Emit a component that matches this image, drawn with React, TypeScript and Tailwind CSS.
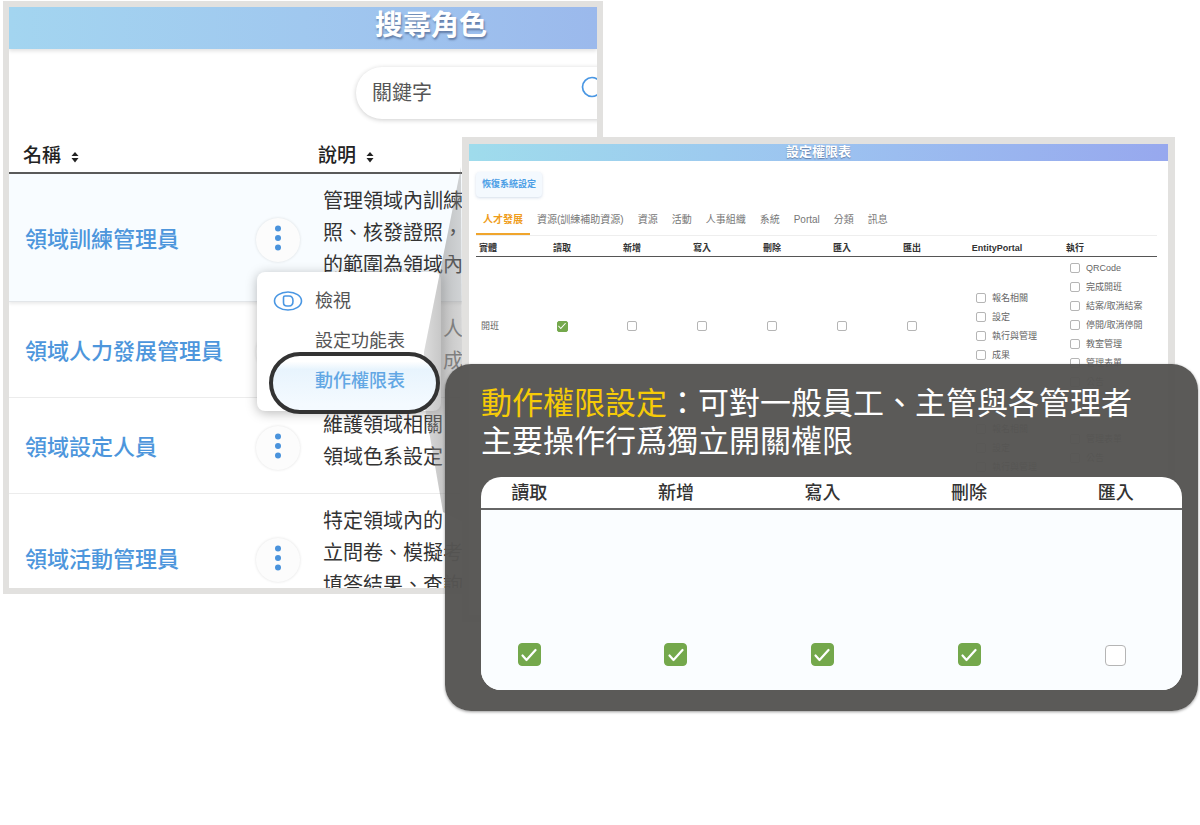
import { useState } from 'react';
import clsx from 'clsx';

const roles = [
  { name: '領域訓練管理員', lines: ['管理領域內訓練', '照、核發證照，', '的範圍為領域內'], active: true },
  { name: '領域人力發展管理員', lines: ['人', '成'], indent: true },
  { name: '領域設定人員', lines: ['維護領域相關', '領域色系設定'] },
  { name: '領域活動管理員', lines: ['特定領域內的', '立問卷、模擬考', '填答結果、查詢'] },
];

const tabs = ['人才發展', '資源(訓練補助資源)', '資源', '活動', '人事組織', '系統', 'Portal', '分類', '訊息'];

const actions = ['讀取', '新增', '寫入', '刪除', '匯入', '匯出'];

const portalItems = ['報名相關', '設定', '執行與管理', '成果'];

const runItems = ['QRCode', '完成開班', '結案/取消結案', '停開/取消停開', '教室管理', '管理表單', '公告'];

const zoomed = [
  { label: '讀取', on: true },
  { label: '新增', on: true },
  { label: '寫入', on: true },
  { label: '刪除', on: true },
  { label: '匯入', on: false },
];

export default function App() {
  return (
    <main className="relative min-h-screen overflow-hidden bg-white pt-px font-['Liberation_Sans','Noto_Sans_CJK_TC',sans-serif]">
      <RolePanel />
      <PermissionPanel />
      <Callout />
    </main>
  );
}

function RolePanel() {
  return (
    <section className="relative ml-[3px] h-[593px] w-1/2 overflow-hidden border-6 border-[#e2e1df] bg-white">
      <header className="flex h-[42px] items-center bg-linear-to-r from-[#a3d5f0] via-[#a0c8ef] to-[#9bb9ec] pl-[366px] shadow-[0_2px_4px_rgba(0,0,0,0.12)]">
        <h1 className="pb-1 text-[28px] leading-8 font-bold whitespace-nowrap text-white [text-shadow:1px_2px_2px_rgba(60,80,120,0.6)]">
          搜尋角色
        </h1>
      </header>

      <div className="mt-[18px] -mr-10 ml-[347px] flex h-[52px] items-center rounded-full bg-white pr-8 pl-4 shadow-[0_1px_5px_rgba(0,0,0,0.2)]">
        <input
          type="search"
          aria-label="關鍵字"
          placeholder="關鍵字"
          className="min-w-0 flex-1 bg-transparent text-[20px] leading-8 text-[#444] outline-none placeholder:text-[#555]"
        />
        <svg viewBox="0 0 24 24" className="mb-3 size-6 shrink-0" fill="none" stroke="#4a97e3" strokeWidth="1.7">
          <circle cx="11" cy="12" r="9.5" />
          <path d="M18 19l5 5" />
        </svg>
      </div>

      <table className="mt-[18px] w-full table-fixed border-collapse text-left">
        <colgroup>
          <col className="w-[247px]" />
          <col className="w-[46px]" />
          <col />
        </colgroup>
        <thead>
          <tr className="h-9 border-b-2 border-[#5a5a5a] text-[19px] leading-6 text-[#222]">
            <th className="pt-[3px] pl-[14px] font-medium">
              名稱
              <SortIcon />
            </th>
            <th />
            <th className="pt-[3px] pl-4 font-medium">
              說明
              <SortIcon />
            </th>
          </tr>
        </thead>
        <tbody>
          {roles.map((role) => (
            <tr
              key={role.name}
              className={clsx(
                'border-b',
                role.active ? 'border-[#e3e6e9] bg-[#f8fcff] shadow-[0_2px_3px_rgba(0,0,0,0.08)]' : 'border-[#ececec]',
              )}
            >
              <td className="pt-[5px] pl-4">
                <a href="#role" className="text-[22px] leading-8 font-medium whitespace-nowrap text-[#4d96dc]">
                  {role.name}
                </a>
              </td>
              <td className="pt-1">
                <button
                  type="button"
                  aria-label="更多"
                  className="flex size-11 items-center justify-center rounded-full bg-[#fcfcfc] shadow-[0_0_3px_rgba(0,0,0,0.12)]"
                >
                  <svg viewBox="0 0 6 26" className="mb-1 h-[26px] w-[6px]" fill="#4a93dc">
                    <circle cx="3" cy="3.5" r="3" />
                    <circle cx="3" cy="13" r="3" />
                    <circle cx="3" cy="22.5" r="3" />
                  </svg>
                </button>
              </td>
              <td
                className={clsx(
                  'pt-[11px] pb-5 align-top text-[20px] leading-8 whitespace-nowrap',
                  role.indent ? 'pl-[141px] text-[#777]' : 'pl-[21px] text-[#333]',
                )}
              >
                {role.lines.map((line) => (
                  <p key={line}>{line}</p>
                ))}
              </td>
            </tr>
          ))}
        </tbody>
      </table>

      <RowMenu />
    </section>
  );
}

function SortIcon() {
  return (
    <svg viewBox="0 0 8 12" className="ml-[10px] inline-block h-3 w-2" fill="#222">
      <path d="M0.5 5L4 1l3.500 4zM0.500 7L4 11.500 7.500 7z" />
    </svg>
  );
}

function RowMenu() {
  return (
    <div className="absolute top-[265px] left-[248px] w-[184px] rounded-lg bg-white pt-[9px] pb-[10px] shadow-[0_2px_12px_rgba(0,0,0,0.28)]">
      <button type="button" className="flex h-10 w-full items-center gap-3 pl-4 text-[18px] text-[#555]">
        <svg viewBox="0 0 30 20" className="h-5 w-[30px]" fill="none" stroke="#4a97e3" strokeWidth="1.6">
          <ellipse cx="15" cy="10" rx="13.500" ry="9" />
          <path d="M12 5h4c2.500 0 4 2.200 4 5s-1.500 5-4 5h-2c-2 0-3.500-1.500-3.500-3.500V6.500c0-1 .5-1.500 1.500-1.500z" />
        </svg>
        檢視
      </button>
      <button type="button" className="flex h-10 w-full items-center pl-[58px] text-[18px] text-[#555]">
        設定功能表
      </button>
      {/* beam that links the picked item to its window */}
      <svg
        viewBox="0 0 60 380"
        className="absolute -top-[120px] left-[160px] h-[380px] w-[60px]"
        aria-hidden="true"
      >
        <defs>
          <linearGradient id="beam" x1="0" y1="0" x2="1" y2="0">
            <stop offset="0" stopColor="#8a8a8a" stopOpacity="0.3" />
            <stop offset="0.5" stopColor="#8a8a8a" stopOpacity="0.5" />
            <stop offset="1" stopColor="#8a8a8a" stopOpacity="0.35" />
          </linearGradient>
        </defs>
        <path d="M44 15L7 200v50l19 110 20 10z" fill="url(#beam)" />
      </svg>
      <button
        type="button"
        className="relative -mt-[9px] -mb-[13px] ml-3 flex h-[62px] w-[171px] items-center rounded-full border-4 border-[#333] bg-linear-to-b from-white from-10% via-[#e8f4fd] via-25% to-[#f4faff] to-90% pb-[3px] pl-[42px] text-[18px] font-medium text-[#62a7e4]"
      >
        動作權限表
      </button>
    </div>
  );
}

function PermissionPanel() {
  const [tab, setTab] = useState(tabs[0]);

  return (
    <section className="absolute top-[137px] right-[25px] left-[462px] h-[485px] overflow-hidden border-7 border-[#e2e1df] bg-white">
      <header className="flex h-[17px] items-center justify-center bg-linear-to-r from-[#9fdcec] via-[#9cc3f0] to-[#97a8ee]">
        <h2 className="pb-px text-[13px] leading-4 font-bold text-white [text-shadow:0_1px_1px_rgba(60,80,120,0.6)]">
          設定權限表
        </h2>
      </header>

      <div className="pt-[11px] pr-[11px] pl-[7px]">
        <button
          type="button"
          className="flex h-[25px] items-center rounded-sm bg-[#f4f9fe] px-[6px] text-[9px] font-bold text-[#4d9fe6] shadow-[0_1px_3px_rgba(80,120,170,0.25)]"
        >
          恢復系統設定
        </button>

        <nav className="mt-[9px] flex border-b border-[#eee]">
          {tabs.map((name) => (
            <button
              key={name}
              type="button"
              onClick={() => setTab(name)}
              className={clsx(
                'h-[29px] border-b-2 px-[7px] text-[10px] whitespace-nowrap',
                tab === name ? 'border-[#f0a52c] font-bold text-[#ef9d1c]' : 'border-transparent text-[#777]',
              )}
            >
              {name}
            </button>
          ))}
        </nav>

        <table className="w-full table-fixed border-collapse text-[9px] leading-3 text-[#666]">
          <colgroup>
            <col className="w-[51px]" />
            {actions.map((a) => (
              <col key={a} className="w-[70px]" />
            ))}
            <col className="w-[100px]" />
            <col />
          </colgroup>
          <thead>
            <tr className="h-5 border-b border-[#555] font-bold text-[#333]">
              <th className="pt-1 pl-[3px] text-left">實體</th>
              {actions.map((a) => (
                <th key={a} className="pt-1">
                  {a}
                </th>
              ))}
              <th className="pt-1">EntityPortal</th>
              <th className="pt-1 pl-[19px] text-left">執行</th>
            </tr>
          </thead>
          <tbody>
            <tr>
              <td className="pl-[5px]">開班</td>
              {actions.map((a, i) => (
                <td key={a}>
                  <span className="flex justify-center">
                    <Tick label={`開班 ${a}`} on={i === 0} small />
                  </span>
                </td>
              ))}
              <td className="pl-[29px]">
                <TickList items={portalItems} />
              </td>
              <td className="pt-[2px] pb-1 pl-[23px]">
                <TickList items={runItems} />
              </td>
            </tr>
            <tr className="h-[105px]">
              <td colSpan={7} />
              <td className="pl-[29px]">
                <TickList items={portalItems.slice(0, 3)} />
              </td>
              <td className="pl-[23px]">
                <TickList items={runItems.slice(5)} />
              </td>
            </tr>
          </tbody>
        </table>
      </div>
    </section>
  );
}

function TickList({ items }: { items: string[] }) {
  return (
    <div className="flex flex-col">
      {items.map((item) => (
        <label key={item} className="flex h-[19px] items-center gap-[6px] whitespace-nowrap">
          <Tick small />
          {item}
        </label>
      ))}
    </div>
  );
}

function Callout() {
  return (
    <section className="absolute top-[364px] right-[2px] left-[445px] rounded-[26px] bg-[#565553]/97 pt-[21px] pr-4 pb-[21px] pl-9 shadow-[0_1px_3px_rgba(0,0,0,0.4)]">
      <p className="-mr-3 text-[31px] leading-[38px] text-white">
        <span className="text-[#f6cb07]">動作權限設定</span>：可對一般員工、主管與各管理者
        <br />
        主要操作行爲獨立開關權限
      </p>
      <div className="mt-4 overflow-hidden rounded-[20px] bg-white">
        <div className="-mr-[7px] -ml-[25px]">
          <table className="w-full table-fixed border-collapse">
            <thead>
              <tr className="h-8 border-b-2 border-[#666] text-[18px] leading-6 text-[#333]">
                {zoomed.map((col) => (
                  <th key={col.label} className="font-medium">
                    {col.label}
                  </th>
                ))}
              </tr>
            </thead>
            <tbody>
              <tr className="h-[181px] bg-[#fafdff]">
                {zoomed.map((col) => (
                  <td key={col.label} className="pb-6 align-bottom">
                    <span className="flex justify-center">
                      <Tick label={col.label} on={col.on} />
                    </span>
                  </td>
                ))}
              </tr>
            </tbody>
          </table>
        </div>
      </div>
    </section>
  );
}

function Tick({ label, on = false, small = false }: { label?: string; on?: boolean; small?: boolean }) {
  return (
    <span className="grid place-items-center">
      <input
        type="checkbox"
        aria-label={label}
        defaultChecked={on}
        className={clsx(
          'peer col-start-1 row-start-1 appearance-none border border-[#b5b5b5] bg-white checked:border-[#74a84c] checked:bg-[#74a84c]',
          small ? 'size-[10px] rounded-[2px] checked:size-[11px]' : 'size-[21px] rounded-sm checked:size-[23px]',
        )}
      />
      <svg
        viewBox="0 0 16 16"
        className={clsx(
          'pointer-events-none invisible col-start-1 row-start-1 peer-checked:visible',
          small ? 'size-2' : 'size-4',
        )}
        fill="none"
        stroke="#fff"
        strokeWidth="2.2"
        strokeLinecap="round"
        strokeLinejoin="round"
      >
        <path d="M1.500 8.500l4 4.500L14.500 3" />
      </svg>
    </span>
  );
}
